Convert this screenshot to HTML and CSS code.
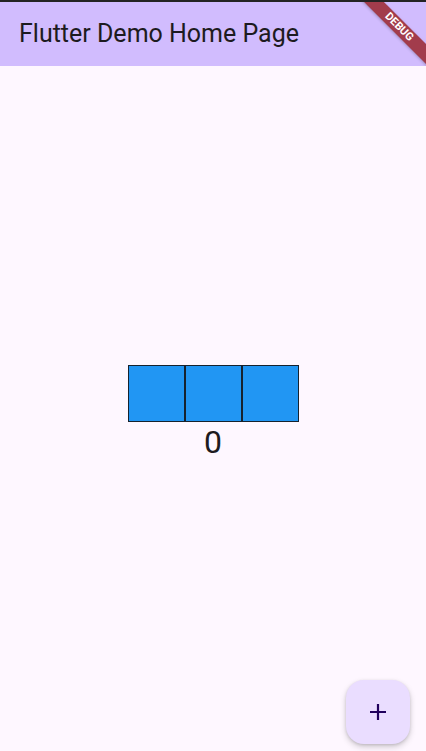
FILE: index.html
```html
<!DOCTYPE html>
<html lang="en">
<head>
    <meta charset="UTF-8">
    <meta name="viewport" content="width=device-width, initial-scale=1.0">
    <title>Flutter Demo Home Page</title>
    <link rel="stylesheet" href="styles.css">
</head>
<body>
    <div class="status-bar"></div>
    <header class="app-bar">
        <h1 class="title">Flutter Demo Home Page</h1>
        <div class="debug-banner">DEBUG</div>
    </header>
    <main class="content">
        <div class="column">
            <div class="box-row">
                <div class="box"></div>
                <div class="box"></div>
                <div class="box"></div>
            </div>
            <div class="counter">0</div>
        </div>
    </main>
    <button class="fab" type="button" aria-label="Increment">
        <svg width="18" height="18" viewBox="0 0 18 18">
            <path d="M9 1v16M1 9h16" stroke="#21005D" stroke-width="2.2" fill="none"/>
        </svg>
    </button>
</body>
</html>
```

FILE: styles.css
```css
html, body {
    height: 100%;
}
body {
    margin: 0;
    display: flex;
    flex-direction: column;
    background-color: #FEF7FF;
    font-family: Roboto, "Noto Sans", sans-serif;
    color: #1D1B20;
    overflow: hidden;
    position: relative;
}
.status-bar {
    height: 2px;
    background-color: #232323;
}
.app-bar {
    height: 64px;
    background-color: #D1BCFE;
    display: flex;
    align-items: center;
    padding-left: 19px;
    position: relative;
    overflow: hidden;
}
.title {
    margin: 0;
    font-size: 25px;
    font-weight: 400;
    line-height: 32px;
}
/* the red ribbon in the corner */
.debug-banner {
    position: absolute;
    top: 18px;
    right: -38px;
    width: 130px;
    height: 14px;
    line-height: 14px;
    transform: rotate(45deg);
    background-color: #A23C4C;
    color: #fff;
    font-size: 11px;
    font-weight: 700;
    text-align: center;
    box-shadow: 0 1px 3px rgba(0, 0, 0, 0.25);
}
.content {
    flex: 1;
    display: flex;
    justify-content: center;
    align-items: center;
    padding-top: 11px;
}
.column {
    display: flex;
    flex-direction: column;
    align-items: center;
}
.box-row {
    display: flex;
}
.box {
    width: 55px;
    height: 55px;
    background-color: #2196F3;
    border: 1px solid #16222E;
}
.counter {
    font-size: 32px;
    line-height: 41px;
    font-weight: 400;
}
.fab {
    position: absolute;
    right: 16px;
    bottom: 7px;
    width: 64px;
    height: 64px;
    border: none;
    border-radius: 18px;
    background-color: #EADDFF;
    box-shadow: 0 3px 6px rgba(0, 0, 0, 0.18), 0 1px 3px rgba(0, 0, 0, 0.12);
    display: flex;
    align-items: center;
    justify-content: center;
    padding: 0;
}
```
